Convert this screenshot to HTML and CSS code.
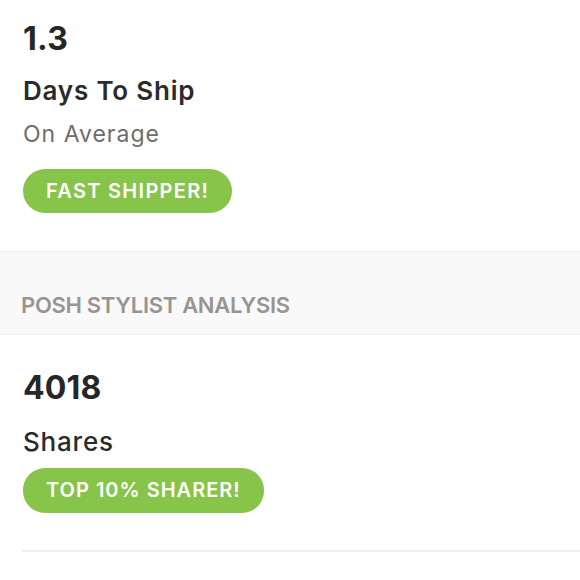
FILE: index.html
```html
<!DOCTYPE html>
<html lang="en">
<head>
<meta charset="utf-8">
<title>Closet Stats</title>
<link rel="stylesheet" href="styles.css">
</head>
<body>
  <section class="stat stat-ship">
    <div class="value">1.3</div>
    <div class="label">Days To Ship</div>
    <div class="sub">On Average</div>
    <span class="badge">FAST SHIPPER!</span>
  </section>
  <div class="band">POSH STYLIST ANALYSIS</div>
  <section class="stat stat-share">
    <div class="value">4018</div>
    <div class="label label-share">Shares</div>
    <span class="badge badge-share">TOP 10% SHARER!</span>
  </section>
  <div class="rule"></div>
</body>
</html>
```

FILE: styles.css
```css
* { box-sizing: border-box; }
html, body {
  margin: 0;
  padding: 0;
  background: #ffffff;
}
body {
  font-family: Inter, "Open Sans", "Liberation Sans", sans-serif;
  color: #2a2a2a;
  width: 580px;
}
.stat {
  display: flex;
  flex-direction: column;
  align-items: flex-start;
  padding-left: 23px;
}
.stat-ship {
  padding-top: 20px;
  padding-bottom: 38px;
}
.stat-share {
  padding-top: 34px;
  padding-bottom: 37px;
}
.value {
  font-size: 32px;
  font-weight: 700;
  line-height: 38px;
  letter-spacing: 0.2px;
  color: #262626;
}
.label {
  margin-top: 17px;
  font-size: 26px;
  font-weight: 600;
  line-height: 32px;
  letter-spacing: 0.8px;
  color: #2b2b2b;
}
.label-share {
  margin-top: 19px;
  font-weight: 500;
}
.sub {
  margin-top: 12px;
  font-size: 23px;
  font-weight: 400;
  line-height: 30px;
  letter-spacing: 1px;
  color: #6f6c6b;
}
.badge {
  margin-top: 20px;
  height: 44px;
  padding: 0 23px;
  border-radius: 22px;
  background: #86c44a;
  color: #ffffff;
  font-size: 20px;
  font-weight: 600;
  line-height: 44px;
  letter-spacing: 1.3px;
}
.badge-share {
  margin-top: 10px;
  height: 45px;
  line-height: 45px;
  letter-spacing: 1px;
}
.band {
  height: 84px;
  background: #faf9f9;
  border-top: 1px solid #f1efee;
  border-bottom: 1px solid #f1efee;
  padding: 39px 0 0 21px;
  font-size: 22px;
  font-weight: 600;
  line-height: 28px;
  letter-spacing: -0.3px;
  color: #979492;
}
.rule {
  margin-left: 22px;
  height: 2px;
  background: #efeeee;
}
```
